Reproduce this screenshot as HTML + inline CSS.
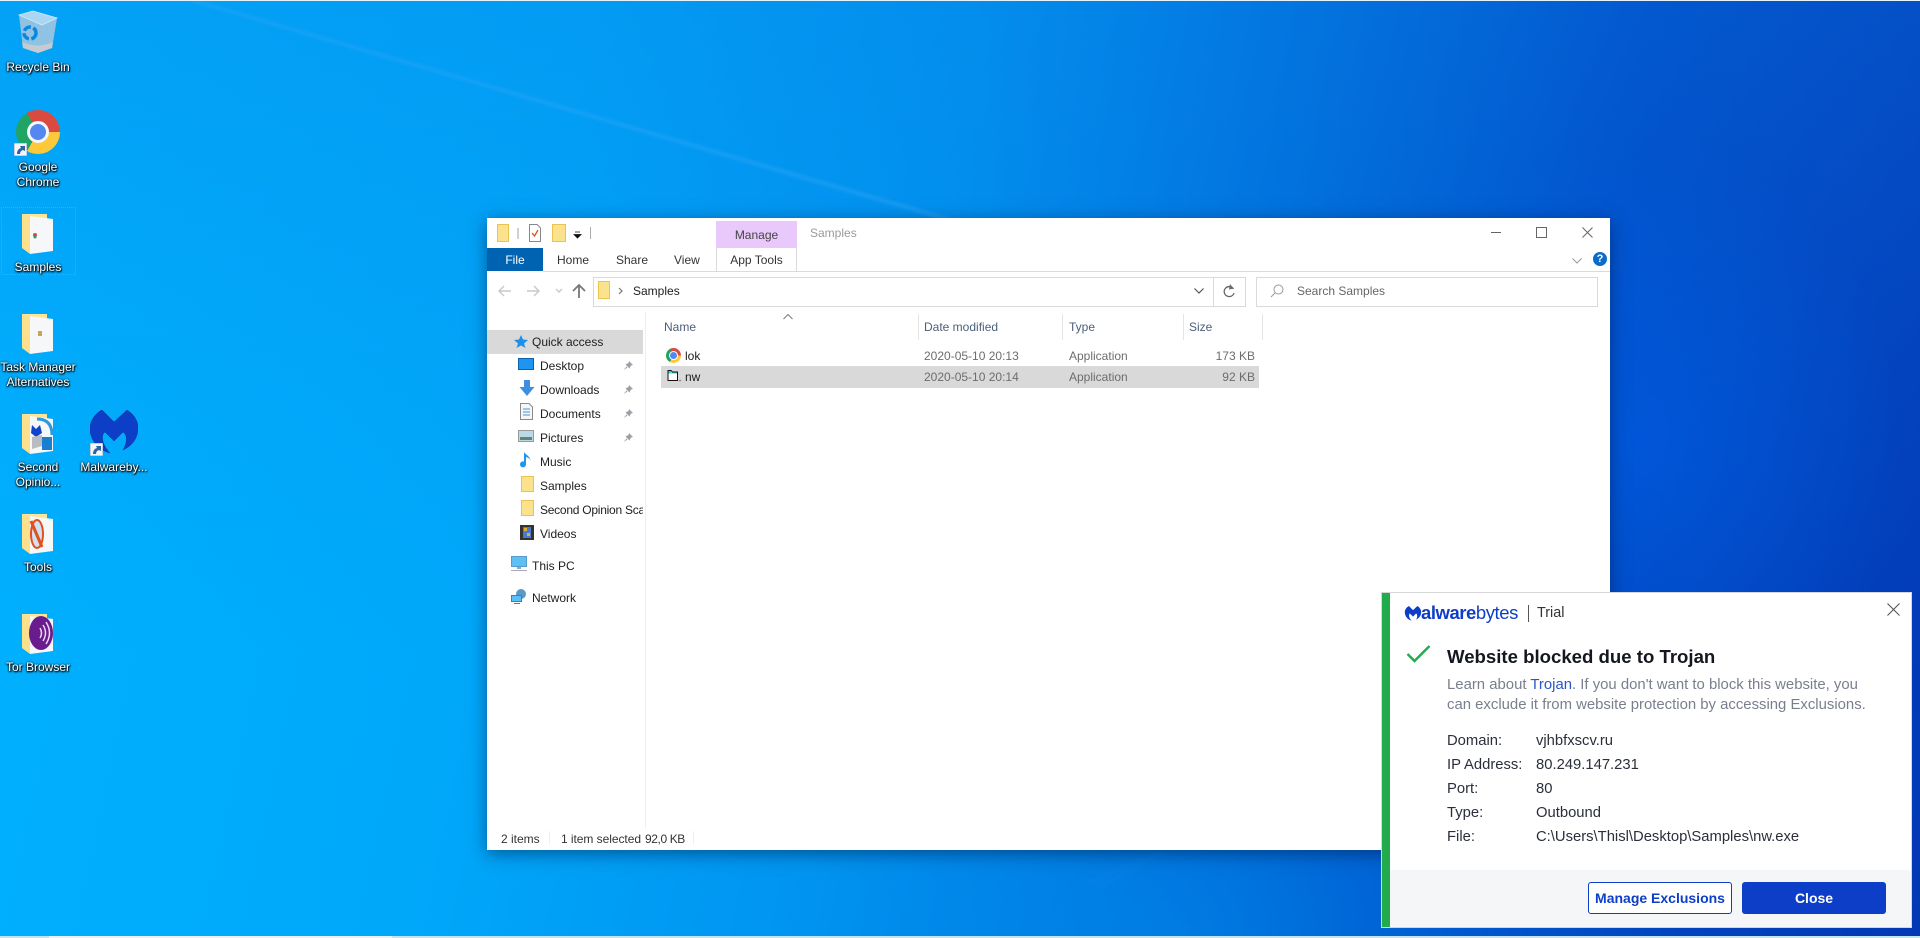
<!DOCTYPE html>
<html>
<head>
<meta charset="utf-8">
<style>
html,body{margin:0;padding:0;width:1920px;height:938px;overflow:hidden}
body{position:relative;font-family:"Liberation Sans",sans-serif;font-size:12px;background:radial-gradient(ellipse 260px 300px at 1640px 440px,rgba(0,95,230,.55),rgba(0,95,230,0)),radial-gradient(ellipse 500px 240px at 1180px 938px,rgba(0,150,240,.4),rgba(0,150,240,0)),linear-gradient(to bottom,rgba(12,120,225,.28) 0,rgba(12,120,225,.08) 45%,rgba(12,120,225,0) 70%),linear-gradient(102deg,#00b2ff 0,#00a8fa 28%,#0094f0 47%,#0070dc 63%,#004cc8 78%,#0338b4 100%)}
div,span,svg{position:absolute}
span.i,b.i{position:static}
.t{white-space:nowrap;line-height:16px;color:#1e1e1e}
.d{color:#fff;text-align:center;width:76px;font-size:12px;line-height:15px;text-shadow:0 1px 2px #000,0 0 2px #000,1px 1px 1px rgba(0,0,0,.7)}
.pop{white-space:nowrap;line-height:20px;font-size:14.8px;color:#2a2f3a}
.g{color:#797f8c}
.sep{background:#e5e5e5;width:1px}
</style>
</head>
<body>
<svg style="left:0;top:0" width="1920" height="938">
<defs><filter id="bl"><feGaussianBlur stdDeviation="1.5"/></filter></defs>
<polygon points="186,0 196,0 965,222 950,222" fill="#3aaaf8" opacity=".4" filter="url(#bl)"/>
<polygon points="1085,880 1160,850 1172,850 1100,890" fill="#1a8cf0" opacity=".12" filter="url(#bl)"/>
</svg>
<div style="left:0;top:0;width:1920px;height:1px;background:#e4f2fa"></div>
<div style="left:0;top:936px;width:1920px;height:2px;background:#c3e3ef"></div>
<div style="left:49px;top:936px;width:343px;height:2px;background:#e8f2f6"></div>

<!-- Recycle bin -->
<svg style="left:17px;top:9px" width="42" height="46" viewBox="0 0 42 46">
<path d="M2 6 L25 16 L40 9 L35 39 L21 44 L6 39 Z" fill="#8fc2e3"/>
<path d="M2 6 L16 2 L40 9 L25 16 Z" fill="#a9d6f2" stroke="#cdeafa" stroke-width=".8"/>
<path d="M5 33 Q21 40 36 33 L35 39 L21 44 L6 39 Z" fill="#c5cbd0"/>
<circle cx="13" cy="24" r="6" fill="none" stroke="#0a88e0" stroke-width="3.500" stroke-dasharray="8 2.500"/>
</svg>
<div class="d" style="left:0;top:60px">Recycle Bin</div>

<!-- Chrome -->
<div style="left:16px;top:110px;width:44px;height:44px;border-radius:50%;background:conic-gradient(from 330deg,#db4a3f 0 120deg,#fdc93a 0 240deg,#1fa463 0)"></div>
<div style="left:27px;top:121px;width:22px;height:22px;border-radius:50%;background:#5488f0;box-sizing:border-box;border:3px solid #f4f7fb"></div>
<svg style="left:14px;top:143px" width="13" height="13"><rect width="13" height="13" fill="#f4f6fa" stroke="#9aa8bb"/><path d="M3 11 Q3 6 7 5 L6 3 L11 3 L11 8 L9 7 Q6 8 6 11Z" fill="#2d63a8"/></svg>
<div class="d" style="left:0;top:160px">Google<br>Chrome</div>

<!-- Samples selection -->
<div style="left:1px;top:207px;width:73px;height:66px;border:1px dotted #e07a4a"></div>
<svg style="left:22px;top:213px" width="31" height="41" viewBox="0 0 31 41"><path d="M0 1 H25 V6 H8 V40 L0 35Z" fill="#fde596"/><path d="M8 3 L31 6 V38 L8 41Z" fill="#f6f7f9"/><path d="M0 1 L8 3 V41 L0 35Z" fill="#fce08c"/><circle cx="13" cy="22" r="2" fill="#db4a3f"/><circle cx="13" cy="24" r="1.500" fill="#1fa463"/></svg>
<div class="d" style="left:0;top:260px">Samples</div>

<svg style="left:22px;top:313px" width="31" height="41" viewBox="0 0 31 41"><path d="M0 1 H25 V6 H8 V40 L0 35Z" fill="#fde596"/><path d="M8 3 L31 6 V38 L8 41Z" fill="#f6f7f9"/><path d="M0 1 L8 3 V41 L0 35Z" fill="#fce08c"/><rect x="16" y="18" width="4" height="5" fill="#c9a35a"/></svg>
<div class="d" style="left:0;top:360px">Task Manager<br>Alternatives</div>

<svg style="left:22px;top:413px" width="31" height="41" viewBox="0 0 31 41"><path d="M0 1 H25 V6 H8 V40 L0 35Z" fill="#fde596"/><path d="M8 3 L31 6 V38 L8 41Z" fill="#f6f7f9"/><path d="M0 1 L8 3 V41 L0 35Z" fill="#fce08c"/><path d="M10 12 L14 16 L18 12 L20 20 L14 24 L9 20Z" fill="#1144c8"/><path d="M10 24 L20 22 V33 L10 36Z" fill="#b9bcc0"/><path d="M15 6 Q30 6 30 22" fill="none" stroke="#2b9be0" stroke-width="3"/><rect x="20" y="24" width="10" height="13" fill="#1a7fd0"/></svg>
<div class="d" style="left:0;top:460px">Second<br>Opinio...</div>

<svg style="left:90px;top:410px" width="48" height="44" viewBox="0 0 48 44"><path d="M12 0 L24 12 L37 0 C45 5 48 12 48 18 C48 28 42 36 33 40 C38 32 37 24 33 22 L24 31 L15 22 C11 24 11 34 20 43 C8 40 0 30 0 18 C0 12 4 4 12 0Z" fill="#0d3ec8" stroke="#0a2f90" stroke-width=".5"/></svg>
<svg style="left:90px;top:443px" width="13" height="13"><rect width="13" height="13" fill="#f4f6fa" stroke="#9aa8bb"/><path d="M3 11 Q3 6 7 5 L6 3 L11 3 L11 8 L9 7 Q6 8 6 11Z" fill="#2d63a8"/></svg>
<div class="d" style="left:76px;top:460px">Malwareby...</div>

<svg style="left:22px;top:513px" width="31" height="41" viewBox="0 0 31 41"><path d="M0 1 H25 V6 H8 V40 L0 35Z" fill="#fde596"/><path d="M8 3 L31 6 V38 L8 41Z" fill="#f6f7f9"/><path d="M0 1 L8 3 V41 L0 35Z" fill="#fce08c"/><ellipse cx="15" cy="21" rx="6" ry="14" fill="#cfe2f4" stroke="#e2501c" stroke-width="2"/><path d="M9 8 L20 34" stroke="#e2501c" stroke-width="3"/></svg>
<div class="d" style="left:0;top:560px">Tools</div>

<svg style="left:22px;top:613px" width="31" height="41" viewBox="0 0 31 41"><path d="M0 1 H25 V6 H8 V40 L0 35Z" fill="#fde596"/><path d="M8 3 L31 6 V38 L8 41Z" fill="#f6f7f9"/><path d="M0 1 L8 3 V41 L0 35Z" fill="#fce08c"/><ellipse cx="19" cy="20" rx="12" ry="17" fill="#6a1b8e"/><path d="M21 12 Q26 20 21 28 M24 9 Q31 20 24 31 M18 15 Q21 20 18 25" fill="none" stroke="#e8d8f0" stroke-width="1.500"/></svg>
<div class="d" style="left:0;top:660px">Tor Browser</div>

<!-- Explorer window -->
<div id="win" style="left:487px;top:218px;width:1123px;height:632px;background:#fff;box-shadow:0 4px 16px rgba(0,20,60,.5)">
  <svg style="left:9px;top:5px" width="90" height="22">
    <path d="M1.500 1.500H12.500V18.500H1.500Z" fill="#fde28d" stroke="#e9c44f"/>
    <path d="M22 5V16" stroke="#a0a0a0"/>
    <path d="M33.500 1.500H41L44.500 5V18.500H33.500Z" fill="#fff" stroke="#888"/>
    <path d="M36 10L38.500 13L42 7" fill="none" stroke="#e2501c" stroke-width="1.300"/>
    <path d="M56.500 1.500H69.500V18.500H56.500Z" fill="#fde28d" stroke="#e9c44f"/>
    <path d="M79 9H84M78 11.500H85L81.500 15Z" fill="#111" stroke="#111" stroke-width=".8"/>
  </svg>
  <div class="sep" style="left:103px;top:9px;height:12px;background:#aaa"></div>
  <div style="left:229px;top:3px;width:81px;height:27px;background:#e9c8fb"></div>
  <div class="t" style="left:229px;top:9px;width:81px;text-align:center;color:#444">Manage</div>
  <div class="t" style="left:323px;top:7px;color:#9b9b9b">Samples</div>
  <div style="left:0;top:30px;width:56px;height:23px;background:#0063b1"></div>
  <div class="t" style="left:0;top:34px;width:56px;text-align:center;color:#fff">File</div>
  <div class="t" style="left:70px;top:34px;color:#333">Home</div>
  <div class="t" style="left:129px;top:34px;color:#333">Share</div>
  <div class="t" style="left:187px;top:34px;color:#333">View</div>
  <div style="left:229px;top:30px;width:79px;height:23px;border:1px solid #d9d9d9;border-width:0 1px"></div>
  <div class="t" style="left:229px;top:34px;width:81px;text-align:center;color:#333">App Tools</div>
  <div style="left:56px;top:53px;width:1067px;height:1px;background:#dadada"></div>
  <!-- window controls -->
  <div style="left:1004px;top:14px;width:10px;height:1px;background:#666"></div>
  <div style="left:1049px;top:9px;width:9px;height:9px;border:1px solid #666"></div>
  <svg style="left:1095px;top:9px" width="11" height="11"><path d="M.5 .5L10.500 10.500M10.500 .5L.5 10.500" stroke="#666"/></svg>
  <svg style="left:1085px;top:40px" width="10" height="6"><path d="M.5 .5L5 5L9.500 .5" fill="none" stroke="#999"/></svg>
  <div style="left:1106px;top:34px;width:14px;height:14px;border-radius:50%;background:#0a6cc8;color:#fff;font:bold 11px/14px 'Liberation Sans',sans-serif;text-align:center">?</div>
  <!-- nav arrows -->
  <svg style="left:10px;top:64px" width="90" height="18"><g fill="none" stroke="#c8c8c8" stroke-width="1.400"><path d="M2 9H14M7 4L2 9L7 14"/><path d="M30 9H42M37 4L42 9L37 14"/><path d="M59 7L62 10L65 7"/></g><path d="M82 16V3M76 9L82 3L88 9" fill="none" stroke="#777" stroke-width="1.800"/></svg>
  <!-- address -->
  <div style="left:106px;top:59px;width:651px;height:28px;border:1px solid #d9d9d9;box-sizing:content-box"></div>
  <svg style="left:110px;top:63px" width="32" height="20"><path d="M1.500 .5H12.500V17.500H1.500Z" fill="#fde28d" stroke="#e9c44f"/><path d="M22 7L25 10L22 13" fill="none" stroke="#777" stroke-width="1.200"/></svg>
  <div class="t" style="left:146px;top:65px;color:#222">Samples</div>
  <svg style="left:707px;top:70px" width="10" height="7"><path d="M.5 .5L5 5L9.500 .5" fill="none" stroke="#555" stroke-width="1.200"/></svg>
  <div style="left:726px;top:59px;width:1px;height:30px;background:#d9d9d9"></div>
  <svg style="left:735px;top:66px" width="14" height="15"><path d="M11.500 5A5 5 0 1 0 12 9" fill="none" stroke="#666" stroke-width="1.300"/><path d="M8 0L11.500 4.500L7 5.500Z" fill="#666"/></svg>
  <!-- search -->
  <div style="left:769px;top:59px;width:340px;height:28px;border:1px solid #d9d9d9"></div>
  <svg style="left:783px;top:66px" width="14" height="14"><circle cx="8.500" cy="5.500" r="4.500" fill="none" stroke="#999"/><path d="M5 9L1 13" stroke="#999"/></svg>
  <div class="t" style="left:810px;top:65px;color:#666">Search Samples</div>
  <!-- nav pane -->
  <div style="left:158px;top:94px;width:1px;height:516px;background:#efefef"></div>
  <div style="left:0;top:112px;width:156px;height:24px;background:#d9d9d9"></div>
  <svg style="left:26px;top:116px" width="16" height="15"><path d="M8 1L10 5.500L15 6L11 9.500L12.500 14L8 11.500L3.500 14L5 9.500L1 6L6 5.500Z" fill="#1e90ea"/></svg>
  <div class="t" style="left:45px;top:116px">Quick access</div>

  <svg style="left:31px;top:123px" width="18" height="120">
    <rect x=".5" y="17.500" width="15" height="11" fill="#1e96f0" stroke="#0a62b0"/>
  </svg>
  <div class="t" style="left:53px;top:140px">Desktop</div>
  <svg style="left:32px;top:162px" width="16" height="18"><path d="M5 0H11V7H15.500L8 16L.5 7H5Z" fill="#3f8fe0"/></svg>
  <div class="t" style="left:53px;top:164px">Downloads</div>
  <svg style="left:33px;top:185px" width="13" height="17"><path d="M.5 .5H9L12.500 4V16.500H.5Z" fill="#f4f6f8" stroke="#8a8a8a"/><path d="M3 6H10M3 9H10M3 12H10" stroke="#4a94d0"/></svg>
  <div class="t" style="left:53px;top:188px">Documents</div>
  <svg style="left:31px;top:212px" width="16" height="13"><rect x=".5" y=".5" width="15" height="11" fill="#bcd8e6" stroke="#999"/><rect x="2" y="7" width="12" height="3" fill="#5a8a6a"/></svg>
  <div class="t" style="left:53px;top:212px">Pictures</div>
  <svg style="left:33px;top:234px" width="13" height="17"><path d="M5 1V12A3 3 0 1 1 3 9.500V0C5 3 10 5 10 10C10 7 8 6 5 5Z" fill="#1e96f0" transform="translate(1,0)"/></svg>
  <div class="t" style="left:53px;top:236px">Music</div>
  <svg style="left:34px;top:258px" width="13" height="17"><path d="M.5 .5H12.500V15.500H.5Z" fill="#fde28d" stroke="#e9c44f"/></svg>
  <div class="t" style="left:53px;top:260px">Samples</div>
  <svg style="left:34px;top:282px" width="13" height="17"><path d="M.5 .5H12.500V15.500H.5Z" fill="#fde28d" stroke="#e9c44f"/></svg>
  <div style="left:53px;top:284px;width:103px;height:16px;overflow:hidden"><div class="t" style="left:0;top:0;letter-spacing:-.25px">Second Opinion Scanners</div></div>
  <svg style="left:33px;top:307px" width="14" height="15"><rect width="14" height="15" fill="#333"/><rect x="3" y="2" width="8" height="11" fill="#4a7ad0"/><rect x="4" y="3" width="3" height="3" fill="#e0b030"/><rect x="7" y="8" width="3" height="3" fill="#e0b030"/></svg>
  <div class="t" style="left:53px;top:308px">Videos</div>
  <svg style="left:24px;top:338px" width="17" height="16"><rect x=".5" y=".5" width="15" height="10" fill="#5cc0f5" stroke="#5a9ac8"/><rect x="6" y="11" width="4" height="2" fill="#8ac"/><rect y="14" width="16" height="1" fill="#aab"/></svg>
  <div class="t" style="left:45px;top:340px">This PC</div>
  <svg style="left:24px;top:370px" width="17" height="17"><circle cx="10" cy="6" r="5" fill="#5a9ac8"/><rect x=".5" y="7.500" width="10" height="6" fill="#5cc0f5" stroke="#3a82b0"/><rect x="3" y="15" width="6" height="1" fill="#3a82b0"/></svg>
  <div class="t" style="left:45px;top:372px">Network</div>
  <!-- pins -->
  <svg style="left:136px;top:142px" width="11" height="120"><g fill="#9aa0a6"><path d="M6 1L10 5L8 5.500L6.500 8.500L2.500 4.500L5.500 3Z M3.500 6.500L.5 10L4.500 7.500Z"/><path transform="translate(0,24)" d="M6 1L10 5L8 5.500L6.500 8.500L2.500 4.500L5.500 3Z M3.500 6.500L.5 10L4.500 7.500Z"/><path transform="translate(0,48)" d="M6 1L10 5L8 5.500L6.500 8.500L2.500 4.500L5.500 3Z M3.500 6.500L.5 10L4.500 7.500Z"/><path transform="translate(0,72)" d="M6 1L10 5L8 5.500L6.500 8.500L2.500 4.500L5.500 3Z M3.500 6.500L.5 10L4.500 7.500Z"/></g></svg>
  <!-- header -->
  <svg style="left:296px;top:96px" width="10" height="6"><path d="M.5 5L5 .5L9.500 5" fill="none" stroke="#777"/></svg>
  <div class="t" style="left:177px;top:101px;color:#4c607a">Name</div>
  <div class="t" style="left:437px;top:101px;color:#4c607a">Date modified</div>
  <div class="t" style="left:582px;top:101px;color:#4c607a">Type</div>
  <div class="t" style="left:702px;top:101px;color:#4c607a">Size</div>
  <div class="sep" style="left:431px;top:96px;height:26px"></div>
  <div class="sep" style="left:575px;top:96px;height:26px"></div>
  <div class="sep" style="left:696px;top:96px;height:26px"></div>
  <div class="sep" style="left:775px;top:96px;height:26px"></div>
  <!-- rows -->
  <div style="left:174px;top:148px;width:598px;height:22px;background:#d9d9d9"></div>
  <div style="left:179px;top:130px;width:15px;height:15px;border-radius:50%;background:conic-gradient(from 330deg,#db4a3f 0 120deg,#fdc93a 0 240deg,#1fa463 0)"></div>
  <div style="left:183px;top:134px;width:7px;height:7px;border-radius:50%;background:#5488f0;box-shadow:0 0 0 1px #fff"></div>
  <div class="t" style="left:198px;top:130px">lok</div>
  <svg style="left:180px;top:151px" width="15" height="15"><path d="M1 1.500H4L5.500 3H10.500V11.500H1Z" fill="#fff" stroke="#111"/><path d="M1.500 2H4V3.500H10V4.500H1.500Z" fill="#30d0e0"/><path d="M12 11L13 12L14 11" stroke="#888" fill="none"/></svg>
  <div class="t" style="left:198px;top:151px">nw</div>
  <div class="t" style="left:437px;top:130px;color:#6d6d6d">2020-05-10 20:13</div>
  <div class="t" style="left:437px;top:151px;color:#6d6d6d">2020-05-10 20:14</div>
  <div class="t" style="left:582px;top:130px;color:#6d6d6d">Application</div>
  <div class="t" style="left:582px;top:151px;color:#6d6d6d">Application</div>
  <div class="t" style="left:690px;top:130px;width:78px;text-align:right;color:#6d6d6d">173 KB</div>
  <div class="t" style="left:690px;top:151px;width:78px;text-align:right;color:#6d6d6d">92 KB</div>
  <!-- status -->
  <div class="t" style="left:14px;top:613px;color:#333">2 items</div>
  <div class="sep" style="left:62px;top:613px;height:14px;background:#efefef"></div>
  <div class="t" style="left:74px;top:613px;color:#333;letter-spacing:-.05px">1 item selected</div>
  <div class="t" style="left:158px;top:613px;color:#333;letter-spacing:-.4px">92,0 KB</div>
  <div class="sep" style="left:206px;top:613px;height:14px;background:#efefef"></div>
</div>

<!-- Malwarebytes popup -->
<div style="left:1382px;top:593px;width:529px;height:334px;background:#fff;box-shadow:0 0 0 1px #d6d6d8">
  <div style="left:0;top:0;width:8px;height:334px;background:#22ab4c"></div>
  <div style="left:8px;top:277px;width:521px;height:57px;background:#f5f6f8"></div>
  <svg style="left:21px;top:13px" width="20" height="15" viewBox="0 0 48 44"><path d="M12 0 L24 12 L37 0 C45 5 48 12 48 18 C48 28 42 36 33 40 C38 32 37 24 33 22 L24 31 L15 22 C11 24 11 34 20 43 C8 40 0 30 0 18 C0 12 4 4 12 0Z" fill="#0d3ec8"/></svg>
  <div style="left:39px;top:9px;white-space:nowrap;font-size:18.500px;line-height:22px;color:#0d3ec8;letter-spacing:-.45px"><b class="i">alware</b><span class="i">bytes</span></div>
  <div style="left:146px;top:12px;width:1px;height:17px;background:#555"></div>
  <div class="pop" style="left:155px;top:10px;color:#333;font-size:14.400px">Trial</div>
  <svg style="left:505px;top:10px" width="13" height="13"><path d="M.5 .5L12.500 12.500M12.500 .5L.5 12.500" stroke="#555" stroke-width="1.100"/></svg>
  <svg style="left:24px;top:51px" width="25" height="19"><path d="M1.500 10L8.500 17L23.500 2" fill="none" stroke="#22ab4c" stroke-width="2.400"/></svg>
  <div style="left:65px;top:52px;white-space:nowrap;font-size:18.600px;font-weight:bold;line-height:24px;color:#14171f">Website blocked due to Trojan</div>
  <div class="pop g" style="left:65px;top:82px;font-size:14.900px">Learn about <span class="i" style="color:#2a55c8">Trojan</span>. If you don't want to block this website, you</div>
  <div class="pop g" style="left:65px;top:102px;font-size:14.900px">can exclude it from website protection by accessing Exclusions.</div>
  <div class="pop" style="left:65px;top:138px">Domain:</div><div class="pop" style="left:154px;top:138px">vjhbfxscv.ru</div>
  <div class="pop" style="left:65px;top:162px">IP Address:</div><div class="pop" style="left:154px;top:162px">80.249.147.231</div>
  <div class="pop" style="left:65px;top:186px">Port:</div><div class="pop" style="left:154px;top:186px">80</div>
  <div class="pop" style="left:65px;top:210px">Type:</div><div class="pop" style="left:154px;top:210px">Outbound</div>
  <div class="pop" style="left:65px;top:234px">File:</div><div class="pop" style="left:154px;top:234px">C:\Users\Thisl\Desktop\Samples\nw.exe</div>
  <div style="left:206px;top:289px;width:142px;height:30px;border:1px solid #0d3ec8;border-radius:3px;background:#fff;color:#0d3ec8;font-size:14px;font-weight:bold;line-height:30px;text-align:center;white-space:nowrap">Manage Exclusions</div>
  <div style="left:360px;top:289px;width:144px;height:32px;border-radius:3px;background:#0d3ec8;color:#fff;font-size:14px;font-weight:bold;line-height:32px;text-align:center">Close</div>
</div>
</body>
</html>
